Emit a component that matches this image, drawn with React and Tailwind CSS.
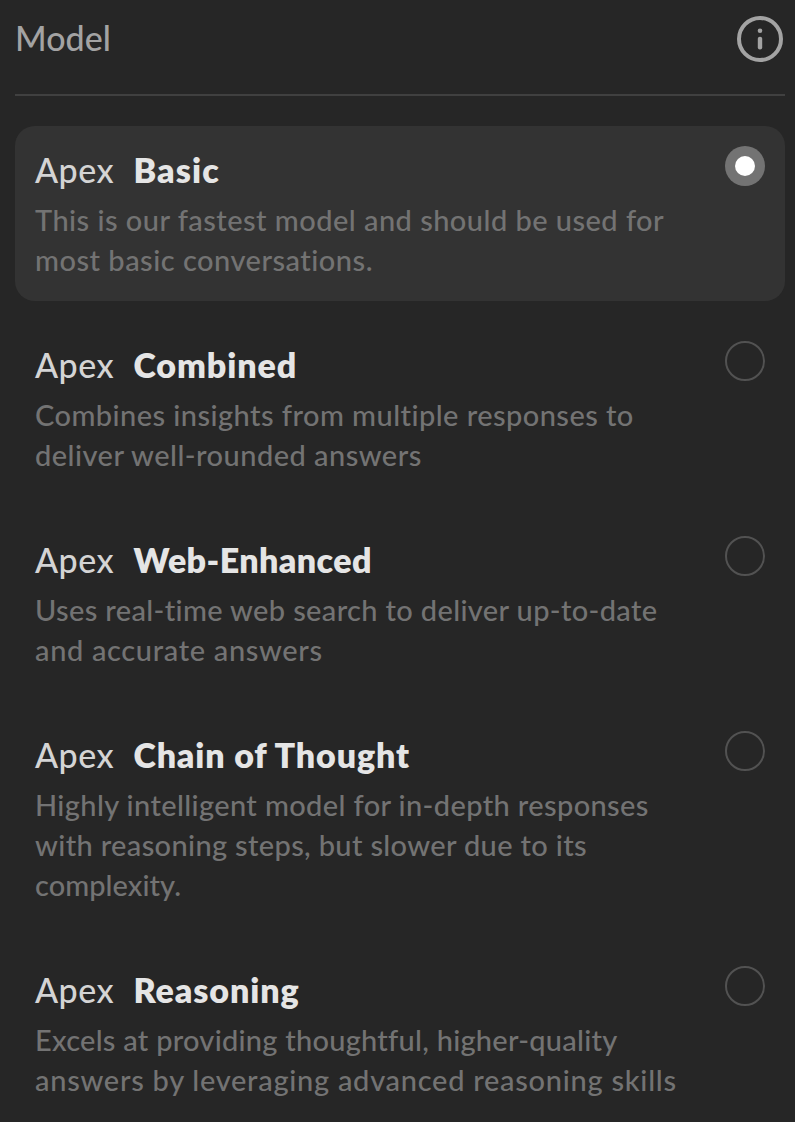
const models = [
  {
    name: "Basic",
    tracking: "tracking-[1.1px]",
    selected: true,
    lines: [
      ["This is our fastest model and should be used for", "tracking-[0.46px]"],
      ["most basic conversations.", "tracking-[0.49px]"],
    ],
  },
  {
    name: "Combined",
    tracking: "tracking-[0.9px]",
    lines: [
      ["Combines insights from multiple responses to", "tracking-[0.44px]"],
      ["deliver well-rounded answers", "tracking-[0.46px]"],
    ],
  },
  {
    name: "Web-Enhanced",
    tracking: "tracking-[0.4px]",
    lines: [
      ["Uses real-time web search to deliver up-to-date", "tracking-[0.35px]"],
      ["and accurate answers", "tracking-[0.65px]"],
    ],
  },
  {
    name: "Chain of Thought",
    tracking: "tracking-[0.85px]",
    lines: [
      ["Highly intelligent model for in-depth responses", "tracking-[0.37px]"],
      ["with reasoning steps, but slower due to its", "tracking-[0.34px]"],
      ["complexity.", "tracking-[0.05px]"],
    ],
  },
  {
    name: "Reasoning",
    tracking: "tracking-[0.9px]",
    lines: [
      ["Excels at providing thoughtful, higher-quality", "tracking-[0.25px]"],
      ["answers by leveraging advanced reasoning skills", "tracking-[0.72px]"],
    ],
  },
];

function InfoIcon() {
  return (
    <svg className="mr-0.5 size-[46px] text-[#a3a3a3]" viewBox="0 0 46 46" fill="none">
      <circle cx="23" cy="23" r="21" stroke="currentColor" strokeWidth="4" />
      <circle cx="23" cy="14.7" r="2.3" fill="currentColor" />
      <rect x="20.8" y="20.8" width="4.4" height="12.6" rx="2" fill="currentColor" />
    </svg>
  );
}

function Radio({ selected }) {
  return selected ? (
    <span className="flex size-10 shrink-0 items-center justify-center rounded-full bg-[#737373]">
      <span className="size-5 rounded-full bg-white" />
    </span>
  ) : (
    <span className="size-10 shrink-0 rounded-full border-2 border-[#525252]" />
  );
}

function ModelOption({ name, tracking, selected, lines }) {
  return (
    <button
      type="button"
      className={
        selected
          ? "flex w-full items-start justify-between rounded-[20px] bg-[#333333] p-5 text-left"
          : "flex w-full items-start justify-between rounded-[20px] p-5 text-left"
      }
    >
      <div className="pb-px">
        <div className="flex h-[54px] text-[34px] leading-[48px] whitespace-nowrap">
          <span className="w-[98.5px] font-medium tracking-[0.5px] text-[#d4d4d4]">Apex</span>
          <span className={`font-extrabold text-[#e5e5e5] ${tracking}`}>{name}</span>
        </div>
        <p className="text-[29px] leading-10 font-medium whitespace-nowrap text-[#737373]">
          {lines.map(([text, spacing]) => (
            <span key={text} className={`block ${spacing}`}>
              {text}
            </span>
          ))}
        </p>
      </div>
      <Radio selected={selected} />
    </button>
  );
}

export default function App() {
  return (
    <main className="h-[1122px] overflow-hidden bg-[#262626] pr-[10px] pl-[15px] font-['Lato',sans-serif]">
      <header className="flex h-24 items-start justify-between border-b-2 border-[#404040] pt-4">
        <h1 className="text-[34px] leading-[44px] font-medium text-[#a3a3a3]">Model</h1>
        <InfoIcon />
      </header>
      <div className="mt-[30px] flex flex-col gap-5">
        {models.map((model) => (
          <ModelOption key={model.name} {...model} />
        ))}
      </div>
    </main>
  );
}
